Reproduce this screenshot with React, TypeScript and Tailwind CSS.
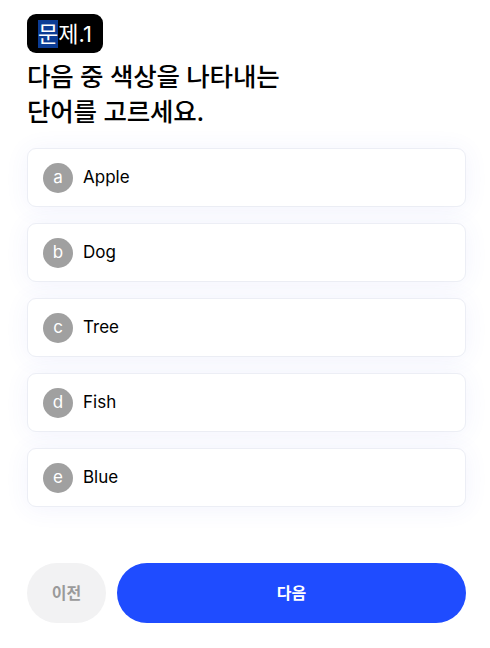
import React from "react";

const options = [
  { k: "a", label: "Apple" },
  { k: "b", label: "Dog" },
  { k: "c", label: "Tree" },
  { k: "d", label: "Fish" },
  { k: "e", label: "Blue" },
];

export default function App() {
  return (
    <div
      className="w-[490px] h-[648px] bg-white pl-[27px] pr-[24px] pt-[14px] text-black"
      style={{ fontFamily: 'Inter, "Noto Sans CJK KR", sans-serif' }}
    >
      <div className="inline-flex items-center h-[39px] px-[11px] rounded-[9px] bg-black text-white text-[22px] leading-none">
        <span className="bg-[#0b3c95] py-[3px]">문</span>
        <span>제.1</span>
      </div>
      <h1 className="mt-[6px] text-[25.5px] leading-[35px] font-medium tracking-[-0.2px]">
        다음 중 색상을 나타내는
        <br />
        단어를 고르세요.
      </h1>
      <div className="mt-[19px] flex flex-col gap-[16px]">
        {options.map((o) => (
          <div
            key={o.k}
            className="h-[59px] flex items-center gap-[10px] px-[15px] rounded-[9px] bg-white border border-[#eceef5] shadow-[0_2px_24px_rgba(70,90,230,0.07)]"
          >
            <div className="w-[30px] h-[30px] rounded-full bg-[#a0a0a0] text-white flex items-center justify-center text-[17px] leading-none pb-[1px]">
              {o.k}
            </div>
            <span className="text-[17px]">{o.label}</span>
          </div>
        ))}
      </div>
      <div className="mt-[56px] flex gap-[11px]">
        <button className="w-[79px] h-[60px] rounded-full bg-[#f2f2f3] text-[#9a9a9a] font-bold text-[16px]">
          이전
        </button>
        <button className="flex-1 h-[60px] rounded-full bg-[#1f4cff] text-white font-bold text-[16px]">
          다음
        </button>
      </div>
    </div>
  );
}
